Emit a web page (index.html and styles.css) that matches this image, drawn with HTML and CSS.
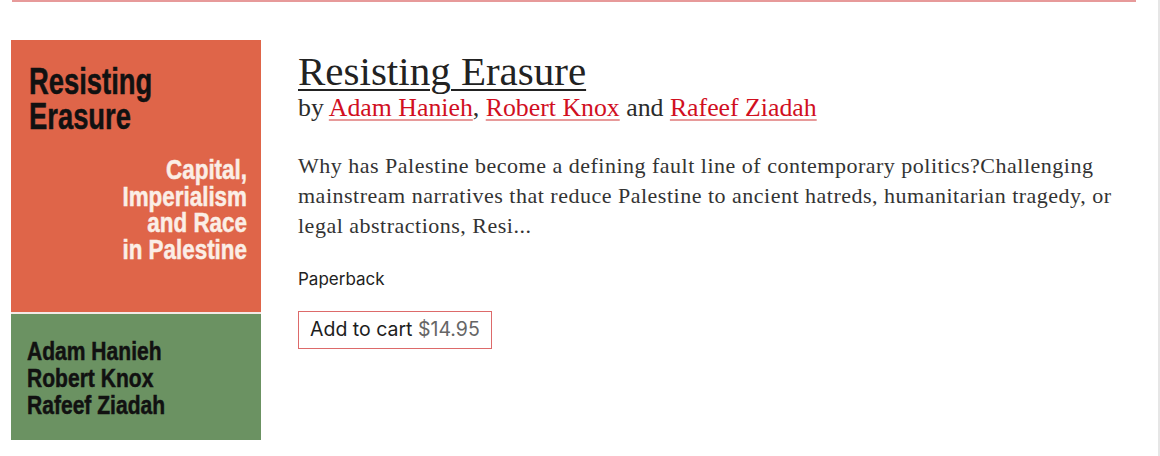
FILE: index.html
```html
<!DOCTYPE html>
<html lang="en">
<head>
<meta charset="utf-8">
<title>Resisting Erasure</title>
<link rel="stylesheet" href="styles.css">
</head>
<body>
<div class="page">
  <div class="rule"></div>
  <article class="book">
    <div class="cover">
      <div class="cover-top">
        <div class="cover-title">Resisting<br>Erasure</div>
        <div class="cover-sub">Capital,<br>Imperialism<br>and Race<br>in Palestine</div>
      </div>
      <div class="cover-bottom">
        <div class="cover-authors">Adam Hanieh<br>Robert Knox<br>Rafeef Ziadah</div>
      </div>
    </div>
    <div class="info">
      <h2 class="title"><a href="#">Resisting Erasure</a></h2>
      <p class="byline">by <a href="#">Adam Hanieh</a>, <a href="#">Robert Knox</a> and <a href="#">Rafeef Ziadah</a></p>
      <p class="desc">Why has Palestine become a defining fault line of contemporary politics?Challenging mainstream narratives that reduce Palestine to ancient hatreds, humanitarian tragedy, or legal abstractions, Resi...</p>
      <p class="format">Paperback</p>
      <button class="cart">Add to cart <span class="price">$14.95</span></button>
    </div>
  </article>
</div>
</body>
</html>
```
FILE: styles.css
```css
html, body {
  margin: 0;
  padding: 0;
  background: #fff;
}
.page {
  height: 456px;
  box-sizing: border-box;
  border-right: 2px solid #e6e6e6;
  overflow: hidden;
}
.rule {
  height: 2px;
  background: #e79a9a;
  margin: 0 22px 0 12px;
}
.book {
  display: flex;
  gap: 37px;
  padding: 38px 0 0 11px;
}
.cover {
  width: 250px;
  flex: none;
  display: flex;
  flex-direction: column;
  gap: 2px;
  background: #f3e9e6;
  font-family: "Liberation Sans", sans-serif;
  font-weight: 700;
  color: #111;
  white-space: nowrap;
  -webkit-text-stroke: 0.5px currentColor;
}
.cover-top {
  height: 272px;
  background: #df6549;
  padding: 24px 14px 0 18px;
  box-sizing: border-box;
}
.cover-title {
  font-size: 37px;
  line-height: 35px;
  transform: scaleX(0.74);
  transform-origin: left;
}
.cover-sub {
  margin-top: 23px;
  text-align: right;
  color: #fbeee6;
  font-size: 27px;
  line-height: 26.5px;
  transform: scaleX(0.83);
  transform-origin: right;
}
.cover-bottom {
  height: 126px;
  background: #6b9262;
  padding: 24px 14px 0 16px;
  box-sizing: border-box;
}
.cover-authors {
  font-size: 26px;
  line-height: 27px;
  transform: scaleX(0.81);
  transform-origin: left;
}
.info {
  flex: 1;
  max-width: 840px;
  font-family: "Liberation Serif", "DejaVu Serif", serif;
  color: #2b2b2b;
}
.title {
  margin: 9px 0 0;
  font-size: 41px;
  font-weight: 400;
  line-height: 44px;
}
.title a {
  color: #222;
  text-decoration-thickness: 2px;
  text-underline-offset: 4px;
}
.byline {
  margin: 0;
  font-size: 25.8px;
  line-height: 30px;
}
.byline a {
  color: #d10f1f;
  text-decoration-color: #e79a9a;
  text-decoration-thickness: 2px;
  text-underline-offset: 3px;
}
.desc {
  margin: 28px 0 0;
  font-size: 22px;
  letter-spacing: 0.5px;
  line-height: 30px;
  color: #333;
}
.format {
  margin: 26px 0 0;
  font-family: "Inter", "Liberation Sans", sans-serif;
  font-size: 17px;
  line-height: 24px;
  color: #222;
}
.cart {
  display: block;
  margin-top: 20px;
  padding: 5px 11px 6px;
  background: #fff;
  border: 1.5px solid #dd6a6a;
  font-family: "Inter", "Liberation Sans", sans-serif;
  font-size: 19.5px;
  line-height: 25px;
  color: #1d1d1d;
  cursor: pointer;
}
.price {
  color: #666;
}
```
